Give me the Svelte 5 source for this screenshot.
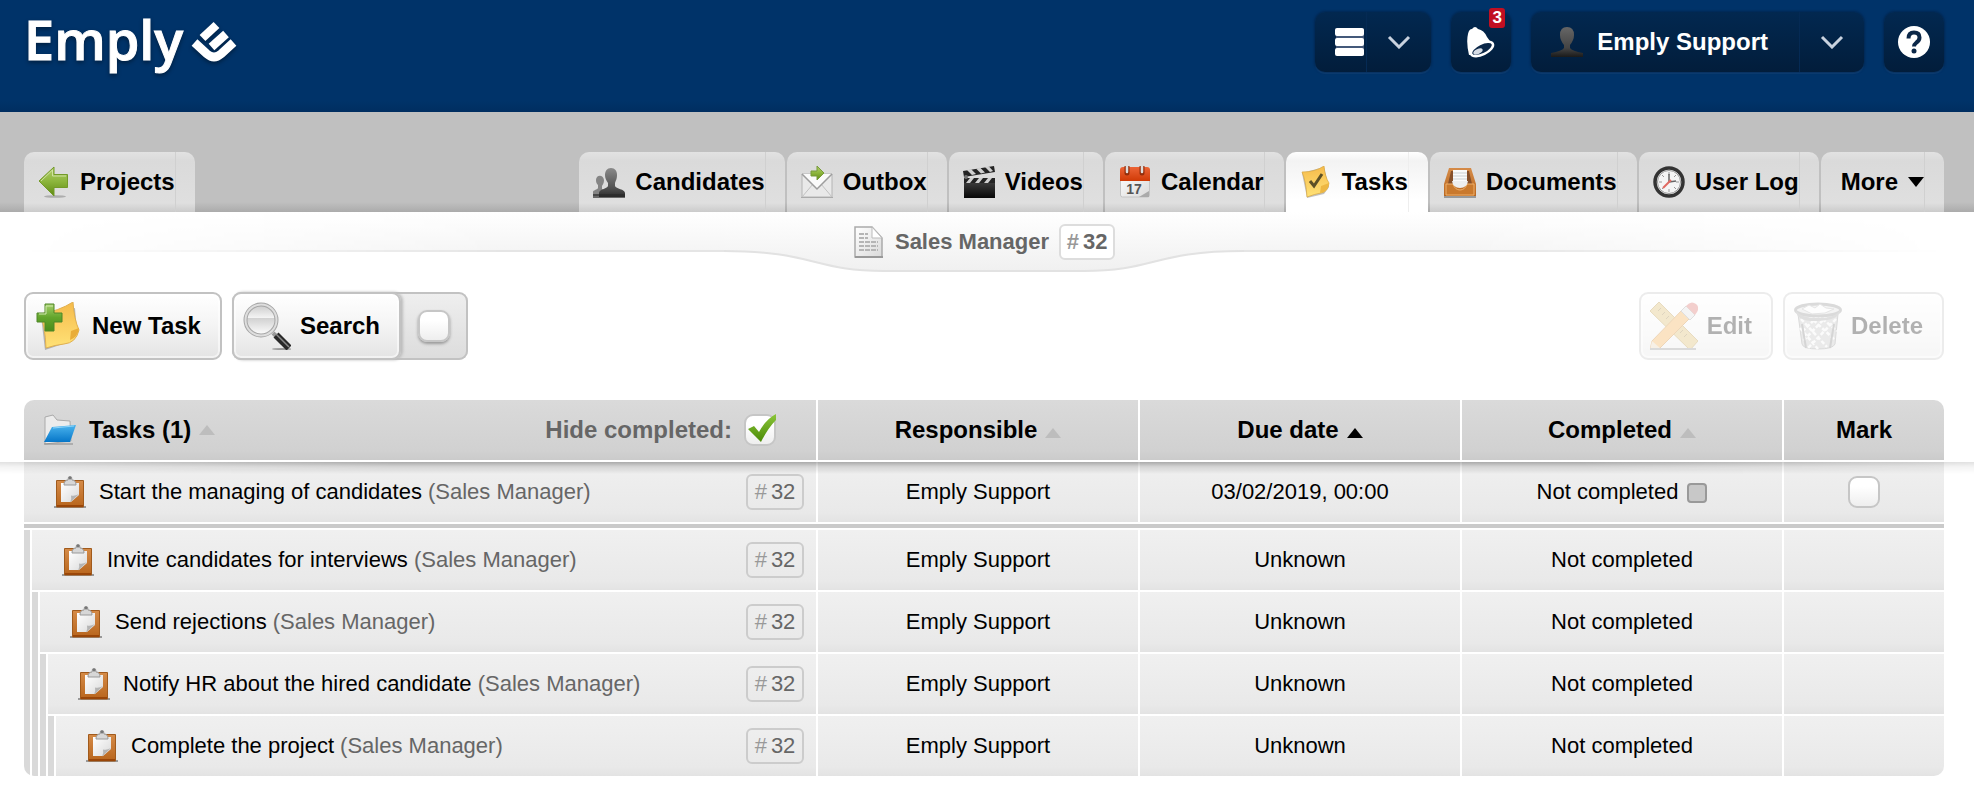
<script>
  const tabs = [
    { label: 'Candidates', icon: 'people' },
    { label: 'Outbox', icon: 'outbox' },
    { label: 'Videos', icon: 'video' },
    { label: 'Calendar', icon: 'calendar' },
    { label: 'Tasks', icon: 'note', active: true },
    { label: 'Documents', icon: 'tray' },
    { label: 'User Log', icon: 'clock' }
  ];

  const columns = [
    { label: 'Responsible', sort: 'off' },
    { label: 'Due date', sort: 'on' },
    { label: 'Completed', sort: 'off' }
  ];

  const project = { name: 'Sales Manager', number: 32 };

  const tasks = [
    { title: 'Start the managing of candidates', due: '03/02/2019, 00:00', depth: 0 },
    { title: 'Invite candidates for interviews', due: 'Unknown', depth: 1 },
    { title: 'Send rejections', due: 'Unknown', depth: 2 },
    { title: 'Notify HR about the hired candidate', due: 'Unknown', depth: 3 },
    { title: 'Complete the project', due: 'Unknown', depth: 4 }
  ];

  let hideCompleted = $state(true);
  let searchActive = $state(false);
  let marked = $state(false);
</script>

<svelte:head><title>Emply</title></svelte:head>

<svg class="defs" width="0" height="0" aria-hidden="true">
  <defs>
    <linearGradient id="green" x1="0" y1="0" x2="0" y2="1"><stop offset="0" stop-color="#b4d06c" /><stop offset=".5" stop-color="#8cb53c" /><stop offset="1" stop-color="#5f8a12" /></linearGradient>
    <linearGradient id="plus" x1="0" y1="0" x2="0" y2="1"><stop offset="0" stop-color="#a5d06a" /><stop offset=".5" stop-color="#62a52c" /><stop offset="1" stop-color="#4a8c1a" /></linearGradient>
    <linearGradient id="tickfill" x1="0" y1="0" x2="0" y2="1"><stop offset="0" stop-color="#8cc63a" /><stop offset="1" stop-color="#4a8a06" /></linearGradient>
    <linearGradient id="dark" x1="0" y1="0" x2="0" y2="1"><stop offset="0" stop-color="#8a8a8a" /><stop offset=".7" stop-color="#505050" /><stop offset="1" stop-color="#2c2c2c" /></linearGradient>
    <linearGradient id="avatar" x1="0" y1="0" x2="0" y2="1"><stop offset="0" stop-color="#666" /><stop offset=".7" stop-color="#444" /><stop offset="1" stop-color="#1a1a1a" /></linearGradient>
    <linearGradient id="black" x1="0" y1="0" x2="0" y2="1"><stop offset="0" stop-color="#444" /><stop offset="1" stop-color="#080808" /></linearGradient>
    <linearGradient id="paper" x1="0" y1="0" x2="1" y2="1"><stop offset="0" stop-color="#fff" /><stop offset="1" stop-color="#dadada" /></linearGradient>
    <linearGradient id="yellow" x1="0" y1="0" x2="0" y2="1"><stop offset="0" stop-color="#f6bb4b" /><stop offset="1" stop-color="#ffe277" /></linearGradient>
    <linearGradient id="wood" x1="0" y1="0" x2="0" y2="1"><stop offset="0" stop-color="#d58b48" /><stop offset="1" stop-color="#b8651c" /></linearGradient>
    <linearGradient id="red" x1="0" y1="0" x2="0" y2="1"><stop offset="0" stop-color="#ec6436" /><stop offset="1" stop-color="#d03a06" /></linearGradient>
    <linearGradient id="blue" x1="0" y1="0" x2="0" y2="1"><stop offset="0" stop-color="#4bb4ee" /><stop offset="1" stop-color="#0676c8" /></linearGradient>
    <linearGradient id="glass" x1="0" y1="0" x2="0" y2="1"><stop offset="0" stop-color="#c9c9c9" /><stop offset=".42" stop-color="#f3f3f3" /><stop offset=".45" stop-color="#d2d2d2" /><stop offset="1" stop-color="#fff" /></linearGradient>
    <linearGradient id="hump" x1="0" y1="0" x2="0" y2="1"><stop offset="0" stop-color="#fff" /><stop offset="1" stop-color="#f0f0f0" /></linearGradient>
  </defs>
</svg>

{#snippet icon(name)}
  {#if name === 'back'}
    <svg class="icon" viewBox="0 0 32 32" aria-hidden="true"><ellipse cx="17" cy="30.500" rx="11" ry="1.300" fill="#999" opacity=".7" /><path d="M1 15 16 1V8.500H29.500V21.500H16V30Z" fill="url(#green)" stroke="#739a29" /><path d="M3 15 14.500 4V10H28" fill="none" stroke="#dbe9b5" opacity=".8" /></svg>
  {:else if name === 'people'}
    <svg class="icon" viewBox="0 0 32 32" aria-hidden="true"><path d="M3 14c0-5 7-6 8 0 0 3-1 4-2 6v3l4 2v5H0v-4c0-2 4-2 5-4v-3c-1-1-2-2-2-5Z" fill="#858585" /><path d="M12 9c0-4 2-7 6-7s6 3 6 7c0 4-1 5-2 8v3c1 3 10 3 10 7v4H6v-4c0-4 8-4 9-7v-3c-2-3-3-5-3-8Z" fill="url(#dark)" /><path d="M0 28H32V32H0Z" fill="#292929" opacity=".65" /></svg>
  {:else if name === 'outbox'}
    <svg class="icon" viewBox="0 0 32 32" aria-hidden="true"><path d="M1 8H31V31H1Z" fill="#e9e9e9" stroke="#b4b4b4" /><path d="M1 31 12 18M31 31 20 18" stroke="#c2c2c2" /><path d="M1 8 16 23 31 8" fill="#fafafa" stroke="#9d9d9d" stroke-width="1.500" /><path d="M0 31.500H32" stroke="#aaa" /><path d="M10 5H16V0L23 7 16 14V10H10Z" fill="url(#green)" stroke="#779a3b" /></svg>
  {:else if name === 'video'}
    <svg class="icon" viewBox="0 0 32 32" aria-hidden="true"><path d="M1 14H32V32H1Z" fill="url(#black)" /><path d="M0 5 31 0 32 6 1 11ZM1 12H32V17H1Z" fill="#242424" /><path d="m4 4 5 5 4-1-5-5Zm9-1.500 5 5 4-1-5-5Zm9-1.500 5 5 3-1-4-4.500ZM3 17l4-5h4l-4 5Zm9 0 4-5h4l-4 5Zm9 0 4-5h4l-4 5Z" fill="#d0d0d0" /><circle cx="3" cy="11" r="2" fill="#777" /></svg>
  {:else if name === 'calendar'}
    <svg class="icon" viewBox="0 0 32 32" aria-hidden="true"><rect x="1.500" y="3" width="29" height="28" rx="2" fill="url(#paper)" stroke="#c4c4c4" /><path d="M1 15V4q0-3 3-3H28q3 0 3 3V15Z" fill="url(#red)" /><path d="M8 0v7M23 0v7" stroke="#932d0a" stroke-width="5" stroke-linecap="round" /><path d="M8 0v6M23 0v6" stroke="#ddd" stroke-width="2.500" stroke-linecap="round" /><text x="15" y="28" text-anchor="middle" font-size="14" font-weight="700" fill="#555">17</text><path d="m20 31 10-6v6Z" fill="#aaa" /></svg>
  {:else if name === 'note'}
    <svg class="icon" viewBox="0 0 32 32" aria-hidden="true"><path d="m2 7 22-6 5 20-5 7-17 4Z" fill="#888" opacity=".5" /><path d="M2 6Q15 6 24 0q1 11 5 17-1 9-8 10-6 1-14 4Q6 15 2 6Z" fill="url(#yellow)" stroke="#d9a63d" stroke-width=".7" /><path d="m20 27 1-7 8-3q-1 9-9 10Z" fill="#eeb742" /><path d="m10 15 4 5 8-12" fill="none" stroke="#5d5026" stroke-width="3" /></svg>
  {:else if name === 'tray'}
    <svg class="icon" viewBox="0 0 32 32" aria-hidden="true"><path d="M5 2H27L32 18V32H0V18Z" fill="url(#wood)" /><path d="M7 5H25L28 18H4Z" fill="#87502a" /><path d="M9 4H23V19H9Z" fill="#fafafa" /><path d="M9 7H23M9 10H23M9 13H23" stroke="#cbd0d2" /><path d="M2 18H9q2 6 7 6t7-6h7V29H2Z" fill="#c9792d" stroke="#efb06b" /><path d="M8 15H24q-1 7-8 7t-8-7Z" fill="#eee" /><path d="M0 31H32" stroke="#999" stroke-width="2" /></svg>
  {:else if name === 'clock'}
    <svg class="icon" viewBox="0 0 32 32" aria-hidden="true"><circle cx="16" cy="16" r="14" fill="#f5f5f5" stroke="#333" stroke-width="3.500" /><circle cx="16" cy="16" r="11.500" fill="none" stroke="#999" /><path d="M16 6v3M16 23v3M6 16h3M23 16h3M9 9l2 2M21 21l2 2M9 23l2-2M21 11l2-2" stroke="#999" /><path d="M16 16V8M16 16l7-1" stroke="#666" stroke-width="1.500" /><path d="m18 14-8 8" stroke="#e06a62" stroke-width="2" /></svg>
  {:else if name === 'doc'}
    <svg class="icon" viewBox="0 0 32 32" aria-hidden="true"><path d="M2 1H19L29 12V31H2Z" fill="url(#paper)" stroke="#aaa" stroke-width="1.500" /><path d="M19 1v11h10Z" fill="#fff" stroke="#bbb" /><path d="M6 8h9M6 12h9M6 16h19M6 20h19M6 24h19" stroke="#b5b5b5" stroke-width="2" stroke-dasharray="5 1" /><path d="M2 31H30" stroke="#999" stroke-width="2" /></svg>
  {:else if name === 'folder'}
    <svg class="icon" viewBox="0 0 32 32" aria-hidden="true"><path d="M1 30V3L9 1l4 5 13 1 1 20Z" fill="#ececec" stroke="#aaa" /><path d="M0 29H29V31H0Z" fill="#888" opacity=".5" /><path d="M8 13 32 11 26 28H0Z" fill="url(#blue)" /><path d="M9 14 30 12" stroke="#8ed4fa" /></svg>
  {:else if name === 'clipboard'}
    <svg class="icon" viewBox="0 0 32 32" aria-hidden="true"><path d="M0 31H32" stroke="#999" stroke-width="2" /><path d="M2.500 4.500H29.500V31H2.500Z" fill="url(#wood)" stroke="#a05a1c" /><path d="M3 30H29" stroke="#9a4608" stroke-width="2" /><path d="M7 7H25V19L17 26H7Z" fill="url(#paper)" /><path d="M25 18 16 26.500q2-3 1-7 4 1 8-1.500Z" fill="#b4b4b4" /><path d="M10 9q0-5 4-5 0-4 2-4t2 4q4 0 4 5Z" fill="#d7d7d7" stroke="#999" /><circle cx="16" cy="2" r="1.500" fill="#777" /></svg>
  {:else if name === 'new'}
    <svg class="icon large" viewBox="0 0 48 48" aria-hidden="true"><path d="m6 14 34-8 2 25-8 9-24 8Z" fill="#777" opacity=".5" /><path d="M5 12Q24 9 38 0q1 17 6 28-3 13-15 14-9 1-18 4Q10 23 5 12Z" fill="url(#yellow)" stroke="#e0b050" /><path d="m35 38 1-9 8-3q-1 9-9 12Z" fill="#e9ad38" /><path d="M10 2h9v9h8v9h-8v9h-9v-9H2v-9h8Z" fill="url(#plus)" stroke="#4f8628" /><path d="M11 12V4h7M4 12h7" fill="none" stroke="#d0e9ae" /></svg>
  {:else if name === 'search'}
    <svg class="icon large" viewBox="0 0 48 48" aria-hidden="true"><ellipse cx="39" cy="47" rx="10" ry="1" fill="#999" /><path d="m30 31 4 4" stroke="#999" stroke-width="4" /><path d="M33 33 46 46" stroke="#292929" stroke-width="7" /><path d="m33 32 13 13" stroke="#8a8a8a" stroke-width="1.500" /><circle cx="18" cy="18" r="15.500" fill="url(#glass)" stroke="#a6a6a6" stroke-width="4" /><circle cx="18" cy="18" r="15.500" fill="none" stroke="#dedede" stroke-width="2" /></svg>
  {:else if name === 'edit'}
    <svg class="icon large" viewBox="0 0 48 48" aria-hidden="true"><path d="m0 9 9-9 39 39-8 9Z" fill="#d9b65c" stroke="#b28c31" /><path d="m8 9 3-3m1 7 3-3m1 7 3-3m11 17 3-3m1 7 3-3" stroke="#94742d" /><path d="M2 39 34 6l8 8L10 46l-10 2Z" fill="#f3a63c" stroke="#c77b1c" /><path d="M2 39 10 46 0 48Z" fill="#e7cfad" /><path d="m31 9 5-5 9 9-5 5Z" fill="#ddd" stroke="#999" /><path d="m36 4q5-6 10-2t-1 11Z" fill="#d9635e" /><path d="M0 47H46" stroke="#888" stroke-width="2" /></svg>
  {:else if name === 'trash'}
    <svg class="icon large" viewBox="0 0 48 48" aria-hidden="true"><path d="M4 12 8 42q1 5 16 5t17-5L44 12Z" fill="#bbb" stroke="#888" /><path d="m7 17 26 28M15 14 41 38M24 13 43 29M6 26 24 47M42 17 14 46M33 14 9 39M24 14 7 31" stroke="#f4f4f4" stroke-width="2.500" stroke-dasharray="4 2" /><path d="M8 22 12 46M40 22 36 46" stroke="#777" stroke-width="2" /><ellipse cx="24" cy="8" rx="22.500" ry="6" fill="#ddd" stroke="#888" stroke-width="3" /><path d="M2 8q0 12 22 11T46 8q-4 8-22 8T2 8Z" fill="#999" /><path d="m8 7 7-4 6 3 5-4 6 4 8 1-9 4-13 1Z" fill="#fafafa" stroke="#aaa" /></svg>
  {/if}
{/snippet}

{#snippet number(bold)}
  <span class="number" class:bold><i>#</i>{project.number}</span>
{/snippet}

{#snippet chevron()}
  <svg class="chevron" width="24" height="14" viewBox="0 0 24 14" aria-hidden="true"><path d="M2 2 12 12 22 2" fill="none" stroke="#c9d2df" stroke-width="3" /></svg>
{/snippet}

<header class="top">
  <a class="logo" href="#home" aria-label="Emply home">
    <span>Emply</span>
    <svg width="46" height="44" viewBox="0 0 46 44" aria-hidden="true"><g fill="none" stroke="#fff" stroke-width="8.500" stroke-linejoin="round"><path d="M3.500 22.500 16 34q7 6 14 0L42.500 22.500" /><path d="M11.500 18 25.500 5" /><path d="M20.500 27 35 14" /></g></svg>
  </a>
  <nav class="account" aria-label="Account">
    <button class="dark menu" aria-label="Menu">
      <svg width="30" height="30" viewBox="0 0 30 30" aria-hidden="true"><rect x="1" y="2" width="28" height="26" fill="#44597a" /><g fill="#fff"><rect width="29" height="8" rx="2" y="1" /><rect y="11" width="29" height="8" rx="2" /><rect y="21" width="29" height="8" rx="2" /></g></svg>
      <span class="drop">{@render chevron()}</span>
    </button>
    <button class="dark square" aria-label="Notifications">
      <svg width="30" height="32" viewBox="0 0 30 32" aria-hidden="true"><path d="M3 29Q0 16 2 8 3 3 6 3q3-4 6 0 6 1 9 8 2 4 7 7Q26 28 3 29Z" fill="#fff" /><ellipse cx="16" cy="23" rx="12" ry="5.500" transform="rotate(-26 16 23)" fill="#0b2748" stroke="#fff" stroke-width="2.500" /><ellipse cx="12" cy="25.500" rx="5" ry="2.500" transform="rotate(-26 12 25.500)" fill="#d5dbe4" /></svg>
      <span class="alert">3</span>
    </button>
    <button class="dark user">
      <svg width="32" height="30" viewBox="0 0 32 30" aria-hidden="true"><path d="M9 8q0-8 7-8t7 8q0 5-4 10v3q2 3 13 5v4H0v-4q11-2 13-5v-3Q9 13 9 8Z" fill="url(#avatar)" /></svg>
      <span class="name">Emply Support</span>
      <span class="drop">{@render chevron()}</span>
    </button>
    <button class="dark square" aria-label="Help">
      <svg width="32" height="32" viewBox="0 0 32 32" aria-hidden="true"><circle cx="16" cy="16" r="16" fill="#fff" /><path d="M10.500 12.500q0-6 5.500-6t5.500 5q0 3-3 5-2.500 2-2.500 4" fill="none" stroke="#0b2748" stroke-width="4" /><circle cx="16" cy="25" r="2.500" fill="#0b2748" /></svg>
    </button>
  </nav>
</header>

<nav class="tabs" aria-label="Project">
  <a class="tab back" href="#projects">{@render icon('back')}<span>Projects</span></a>
  {#each tabs as tab}
    <a class="tab" class:active={tab.active} aria-current={tab.active ? 'page' : undefined} href="#{tab.icon}">{@render icon(tab.icon)}<span>{tab.label}</span></a>
  {/each}
  <button class="tab more"><span>More</span><svg width="16" height="10" viewBox="0 0 16 10" aria-hidden="true"><path d="M0 0H16L8 10Z" /></svg></button>
</nav>

<main>
  <div class="title">
    <div class="ledge" aria-hidden="true">
      <div class="flat"></div>
      <svg width="520" height="62" viewBox="0 0 520 62"><path d="M0 0H520V39C430 39 430 59 360 59H160C90 59 90 39 0 39Z" fill="url(#hump)" /><path d="M0 39C90 39 90 59 160 59H360C430 59 430 39 520 39" fill="none" stroke="#e2e2e2" stroke-width="2" /></svg>
      <div class="flat"></div>
    </div>
    <h1>{@render icon('doc')}<span>{project.name}</span>{@render number(true)}</h1>
  </div>

  <div class="toolbar">
    <button class="action">{@render icon('new')}<span>New Task</span></button>
    <div class="split">
      <button class="action">{@render icon('search')}<span>Search</span></button>
      <label class="side"><input class="check" type="checkbox" aria-label="Filter by search" bind:checked={searchActive} /></label>
    </div>
    <button class="action first-right" disabled>{@render icon('edit')}<span>Edit</span></button>
    <button class="action" disabled>{@render icon('trash')}<span>Delete</span></button>
  </div>

  <div class="list">
    <table>
      <colgroup><col /><col class="mid" /><col class="mid" /><col class="mid" /><col class="end" /></colgroup>
      <thead>
        <tr>
          <th scope="col">
            <div class="heading">
              {@render icon('folder')}
              <span class="caption">Tasks (1)</span>
              <svg class="sort" viewBox="0 0 16 10" aria-hidden="true"><path d="M0 10 8 0 16 10Z" /></svg>
              <label for="hide">Hide completed:</label>
              <span class="tick">
                <input class="check" id="hide" type="checkbox" bind:checked={hideCompleted} />
                {#if hideCompleted}<svg viewBox="0 0 32 32" aria-hidden="true"><path d="m4 15 6-3 5 6Q22 5 32 0V6Q24 14 17 28Z" fill="url(#tickfill)" /></svg>{/if}
              </span>
            </div>
          </th>
          {#each columns as column}
            <th scope="col">{column.label}<svg class="sort {column.sort}" viewBox="0 0 16 10" aria-hidden="true"><path d="M0 10 8 0 16 10Z" /></svg></th>
          {/each}
          <th scope="col">Mark</th>
        </tr>
      </thead>
      <tbody>
        {#each tasks as task}
          <tr>
            <td class="first">
              <div class="line">
                {#each Array(task.depth) as _}<span class="bar"></span>{/each}
                <div class="task">
                  {@render icon('clipboard')}
                  <span>{task.title} <span class="soft">({project.name})</span></span>
                  {@render number(false)}
                </div>
              </div>
            </td>
            <td>Emply Support</td>
            <td>{task.due}</td>
            <td>Not completed{#if task.depth === 0}<button class="status" aria-label="Set completed"></button>{/if}</td>
            <td>{#if task.depth === 0}<input class="check" type="checkbox" aria-label="Mark task" bind:checked={marked} />{/if}</td>
          </tr>
          {#if task.depth === 0}
            <tr class="rule"><td colspan="5"></td></tr>
          {/if}
        {/each}
      </tbody>
    </table>
  </div>
</main>

<style>
  :global(body) { background: #fff; }
  :global(#app) { font: 22px "Liberation Sans", Arial, sans-serif; color: #000; }
  button { font: inherit; color: inherit; border: 0; margin: 0; padding: 0; cursor: pointer; }
  a { color: inherit; text-decoration: none; }
  svg { display: block; flex: none; }
  .defs { position: absolute; }
  .icon { width: 32px; height: 32px; }
  .large { width: 48px; height: 48px; }

  .top {
    display: flex;
    align-items: flex-start;
    justify-content: space-between;
    box-sizing: border-box;
    height: 112px;
    padding: 12px 30px 0 24px;
    background: linear-gradient(#003369 90%, #002e60);
  }
  .logo { display: flex; gap: 8px; color: #fff; font: 600 54px/54px "Open Sans", sans-serif; -webkit-text-stroke: 1px #fff; filter: drop-shadow(0 2px 2px #0006); }
  .logo svg { margin-top: 8px; }
  .account { display: flex; gap: 20px; }
  .dark {
    display: flex;
    align-items: center;
    height: 60px;
    border-radius: 10px;
    background: linear-gradient(#022850, #021d3b);
    box-shadow: 0 0 3px #001b3c, 0 2px 1px #0f4279;
    color: #fff;
  }
  .square { position: relative; width: 60px; justify-content: center; }
  .menu { padding-left: 20px; }
  .drop { display: flex; align-items: center; height: 60px; margin-left: 1px; padding: 0 20px; border-left: 1px solid #052a54; }
  .user { padding-left: 20px; }
  .name { margin: 0 30px 0 14px; font-weight: 700; font-size: 24px; }
  .alert {
    position: absolute;
    top: -4px;
    right: 6px;
    width: 16px;
    border-radius: 3px;
    background: #c10f22;
    font: 700 17px/20px "Liberation Sans", Arial, sans-serif;
    text-align: center;
  }

  .tabs {
    display: flex;
    align-items: flex-end;
    gap: 2px;
    height: 100px;
    padding: 0 30px 0 24px;
    background: linear-gradient(#c0c0c0 90%, #ababab);
  }
  .tab {
    position: relative;
    display: flex;
    align-items: center;
    gap: 10px;
    height: 60px;
    padding: 0 20px 0 14px;
    border-radius: 10px 10px 0 0;
    background: linear-gradient(#e2e2e2, #dadada 15%, #dfdfdf 85%, #cbcbcb);
    font-size: 24px;
    font-weight: 700;
    white-space: nowrap;
    box-sizing: border-box;
  }
  .tab::after { content: ""; position: absolute; top: 0; bottom: 0; right: 19px; width: 1px; background: #d0d0d0; }
  .tab.active { background: linear-gradient(#fff, #f3f3f3 15%, #fff 80%); }
  .tab.active::after { background: #eee; }
  .back { margin-right: auto; }
  .more { padding-left: 20px; }

  .title { position: relative; display: flex; justify-content: center; height: 80px; padding: 12px 30px 0 24px; box-sizing: border-box; }
  .ledge {
    position: absolute;
    inset: 0 30px 0 24px;
    display: flex;
    -webkit-mask: linear-gradient(90deg, transparent, #000 25%, #000 75%, transparent);
    mask: linear-gradient(90deg, transparent, #000 25%, #000 75%, transparent);
  }
  .flat { flex: 1; height: 40px; background: linear-gradient(#fff, #f5f5f5); border-bottom: 2px solid #e5e5e5; box-sizing: border-box; }
  h1 { position: relative; display: flex; align-items: center; gap: 10px; height: 36px; margin: 0; font-size: 22px; color: #666; }
  .number {
    display: inline-flex;
    align-items: center;
    justify-content: center;
    gap: 4px;
    box-sizing: border-box;
    width: 58px;
    height: 36px;
    border: 2px solid #ccc;
    border-radius: 6px;
    color: #666;
  }
  .number i { font-style: normal; color: #999; }
  .number.bold { width: 56px; background: #fff; border-color: #ddd; }

  .toolbar { display: flex; gap: 10px; padding: 0 30px 0 24px; }
  .action {
    display: flex;
    align-items: center;
    gap: 9px;
    height: 68px;
    box-sizing: border-box;
    padding: 0 19px 0 9px;
    border: 2px solid #c2c2c2;
    border-radius: 9px;
    background: linear-gradient(#fff, #f4f4f4 50%, #e4e4e4);
    box-shadow: inset 0 0 0 2px #fff8;
    font-size: 24px;
    font-weight: 700;
    white-space: nowrap;
  }
  .action:disabled { opacity: .3; cursor: default; }
  .first-right { margin-left: auto; }
  .split { display: flex; border-radius: 9px; background: linear-gradient(#efefef, #dcdcdc); box-shadow: inset 0 0 0 2px #c2c2c2; }
  .split .action { box-shadow: inset 0 0 0 2px #fff8, 2px 0 3px #bbb; }
  .side { display: flex; align-items: center; padding: 0 18px 0 17px; }
  .side .check { box-shadow: 0 2px 3px #999; }
  .check {
    appearance: none;
    display: block;
    width: 32px;
    height: 32px;
    box-sizing: border-box;
    margin: 0;
    border: 2px solid #c6c6c6;
    border-radius: 9px;
    background: linear-gradient(#fff 30%, #eee);
    cursor: pointer;
  }

  .list { position: relative; padding: 40px 30px 22px 24px; }
  .list::after {
    content: "";
    position: absolute;
    top: 102px;
    left: 0;
    right: 0;
    height: 12px;
    background: linear-gradient(#0000004a, #0000001c 40%, transparent);
    -webkit-mask: linear-gradient(90deg, #0006, #000 20%, #000 80%, #0006);
    mask: linear-gradient(90deg, #0006, #000 20%, #000 80%, #0006);
    pointer-events: none;
  }
  table { width: 100%; table-layout: fixed; border-collapse: separate; border-spacing: 0; border-radius: 10px; overflow: hidden; }
  .mid { width: 322px; }
  .end { width: 160px; }
  th, td {
    height: 60px;
    padding: 0;
    border-right: 2px solid #fff;
    border-bottom: 2px solid #fff;
    text-align: center;
    vertical-align: middle;
    background: linear-gradient(#f0f0f0, #e9e9e9 85%, #e3e3e3) padding-box;
  }
  th { background: linear-gradient(#dadada, #d1d1d1 85%, #cbcbcb) padding-box; font-size: 24px; }
  th:last-child, td:last-child { border-right: 0; }
  tbody tr:last-child td { border-bottom: 0; }
  .heading { display: flex; align-items: center; padding: 0 40px 0 20px; }
  .caption { margin-left: 13px; }
  .sort { display: inline-block; width: 16px; height: 10px; margin-left: 8px; fill: #bdbdbd; }
  .sort.on { fill: #000; }
  label[for="hide"] { margin-left: auto; color: #666; }
  .tick { position: relative; margin-left: 12px; }
  .tick svg { position: absolute; inset: 0; pointer-events: none; }
  td.first { border-bottom: 0; background: #fff; text-align: left; }
  .line { display: flex; height: 62px; }
  tbody tr:last-child .line { height: 60px; }
  .bar { width: 6px; margin-right: 2px; background: #d9d9d9; }
  .task {
    flex: 1;
    display: flex;
    align-items: center;
    gap: 13px;
    padding: 0 12px 0 30px;
    border-bottom: 2px solid #fff;
    background: linear-gradient(#f0f0f0, #e9e9e9 85%, #e3e3e3) padding-box;
  }
  tbody tr:last-child .task { border-bottom: 0; }
  .task .number { margin-left: auto; }
  .soft { color: #666; }
  .status {
    width: 20px;
    height: 20px;
    margin-left: 9px;
    border: 2px solid #999;
    border-radius: 4px;
    background: #c8c8c8;
    vertical-align: -2px;
  }
  td > .check { margin: 0 auto; }
  .rule td { height: 4px; background: #cacaca padding-box; line-height: 0; }
</style>
